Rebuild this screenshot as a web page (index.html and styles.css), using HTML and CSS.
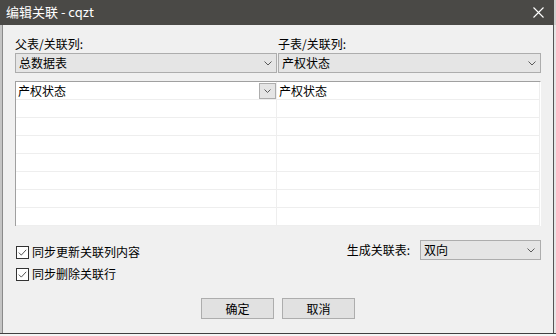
FILE: index.html
```html
<!DOCTYPE html>
<html lang="zh-CN">
<head>
<meta charset="utf-8">
<title>编辑关联 - cqzt</title>
<link rel="stylesheet" href="styles.css">
</head>
<body>
<div class="screen">
  <div class="top">
    <div class="titlebar">
      <span class="title">编辑关联 - cqzt</span>
      <svg class="close" width="11" height="11" viewBox="0 0 11 11"><path d="M0.5 0.5 L10.5 10.5 M10.5 0.5 L0.5 10.5" stroke="#ffffff" stroke-width="1.1" fill="none"/></svg>
    </div>
    <div class="top-edge"></div>
  </div>
  <div class="middle">
    <div class="edge-left"></div>
    <div class="dialog">
      <div class="pair">
        <div class="field">
          <div class="label">父表/关联列:</div>
          <div class="combo"><span>总数据表</span><svg class="chev" width="8" height="5" viewBox="0 0 8 5"><path d="M0.5 0.5 L4 4 L7.5 0.5" stroke="#5a5a5a" fill="none"/></svg></div>
        </div>
        <div class="field">
          <div class="label">子表/关联列:</div>
          <div class="combo"><span>产权状态</span><svg class="chev" width="8" height="5" viewBox="0 0 8 5"><path d="M0.5 0.5 L4 4 L7.5 0.5" stroke="#5a5a5a" fill="none"/></svg></div>
        </div>
      </div>
      <div class="grid">
        <div class="cell first"><span>产权状态</span><span class="cellbtn"><svg width="7" height="4" viewBox="0 0 7 4"><path d="M0.5 0.5 L3.5 3.5 L6.5 0.5" stroke="#5a5a5a" fill="none"/></svg></span></div>
        <div class="cell"><span>产权状态</span></div>
        <div class="cell"></div><div class="cell"></div>
        <div class="cell"></div><div class="cell"></div>
        <div class="cell"></div><div class="cell"></div>
        <div class="cell"></div><div class="cell"></div>
        <div class="cell"></div><div class="cell"></div>
        <div class="cell"></div><div class="cell"></div>
        <div class="cell"></div><div class="cell"></div>
      </div>
      <div class="options">
        <div class="checks">
          <div class="check"><svg class="box" width="13" height="13" viewBox="0 0 13 13"><rect x="0.5" y="0.5" width="12" height="12" fill="#fff" stroke="#333"/><path d="M2.8 6.6 L5.3 9.1 L10.2 3.8" stroke="#555" stroke-width="1" fill="none"/></svg><span>同步更新关联列内容</span></div>
          <div class="check"><svg class="box" width="13" height="13" viewBox="0 0 13 13"><rect x="0.5" y="0.5" width="12" height="12" fill="#fff" stroke="#333"/><path d="M2.8 6.6 L5.3 9.1 L10.2 3.8" stroke="#555" stroke-width="1" fill="none"/></svg><span>同步删除关联行</span></div>
        </div>
        <div class="gen">
          <span class="gen-label">生成关联表:</span>
          <div class="combo small"><span>双向</span><svg class="chev" width="8" height="5" viewBox="0 0 8 5"><path d="M0.5 0.5 L4 4 L7.5 0.5" stroke="#5a5a5a" fill="none"/></svg></div>
        </div>
      </div>
      <div class="buttons">
        <div class="btn">确定</div>
        <div class="btn">取消</div>
      </div>
    </div>
    <div class="edge-right"></div>
  </div>
  <div class="edge-bottom"></div>
</div>
</body>
</html>
```

FILE: styles.css
```css
* { box-sizing: border-box; }
html, body { margin: 0; padding: 0; }
body {
  font-family: "Noto Sans CJK SC", "Noto Sans", sans-serif;
  font-size: 12px;
  color: #000;
  background: #d8d8d8;
}
.screen {
  width: 556px;
  height: 336px;
  overflow: hidden;
  display: flex;
  flex-direction: column;
}
.top { display: flex; height: 25px; }
.titlebar {
  width: 554px;
  height: 25px;
  background: #4a4946;
  display: flex;
  align-items: center;
  justify-content: space-between;
  padding: 0 10px 0 6px;
}
.title {
  color: #ffffff;
  font-size: 13px;
  line-height: 16px;
  margin-top: -1px;
}
.close { display: block; margin-top: -1px; }
.top-edge { flex: 1; background: #cfcfcf; }
.middle { display: flex; height: 308px; }
.edge-left {
  width: 3px;
  background: #c4c4c4;
  border-right: 1px solid #8a8a8a;
}
.edge-right {
  width: 3px;
  background: #e6e6e6;
  border-left: 1px solid #555;
}
.edge-bottom {
  flex: 1;
  background: #f4f4f4;
  border-top: 1px solid #404040;
}
.dialog {
  width: 550px;
  background: #f0f0f0;
  padding: 11px 12px 0 12px;
}
.pair {
  display: grid;
  grid-template-columns: 262px 263px;
  column-gap: 1px;
}
.label { line-height: 16px; height: 16px; }
.combo {
  margin-top: 1px;
  height: 20px;
  background: #e5e5e5;
  border: 1px solid #adadad;
  display: flex;
  align-items: center;
  justify-content: space-between;
  padding: 0 4px 0 3px;
  line-height: 16px;
}
.chev { display: block; }
.grid {
  margin-top: 8px;
  width: 526px;
  display: grid;
  grid-template-columns: 261px 263px;
  border-top: 1px solid #a0a0a0;
  border-left: 1px solid #a0a0a0;
  border-right: 1px solid #ffffff;
  background: #ffffff;
}
.cell {
  height: 18px;
  border-right: 1px solid #eeeeee;
  border-bottom: 1px solid #eeeeee;
  background: #fff;
  display: flex;
  align-items: center;
  justify-content: space-between;
  padding-left: 2px;
  line-height: 16px;
}
.cell.first { padding-right: 0; }
.cellbtn {
  width: 17px;
  height: 16px;
  margin-top: 1px;
  background: #e5e5e5;
  border: 1px solid #adadad;
  display: flex;
  align-items: center;
  justify-content: center;
}
.cellbtn svg { display: block; }
.options {
  margin-top: 14px;
  display: flex;
  justify-content: space-between;
  align-items: flex-start;
}
.checks { padding-top: 1px; }
.check {
  height: 22px;
  display: flex;
  align-items: center;
  gap: 3px;
  padding-left: 1px;
  line-height: 16px;
}
.box { display: block; }
.gen { display: flex; align-items: center; }
.gen-label { line-height: 16px; margin-right: 10px; }
.combo.small { width: 121px; margin-top: 0; padding-left: 3px; padding-right: 5px; }
.buttons {
  margin-top: 13px;
  display: flex;
  justify-content: center;
  gap: 8px;
}
.btn {
  width: 73px;
  height: 21px;
  background: #e1e1e1;
  border: 1px solid #adadad;
  display: flex;
  align-items: center;
  justify-content: center;
  line-height: 16px;
}
```
